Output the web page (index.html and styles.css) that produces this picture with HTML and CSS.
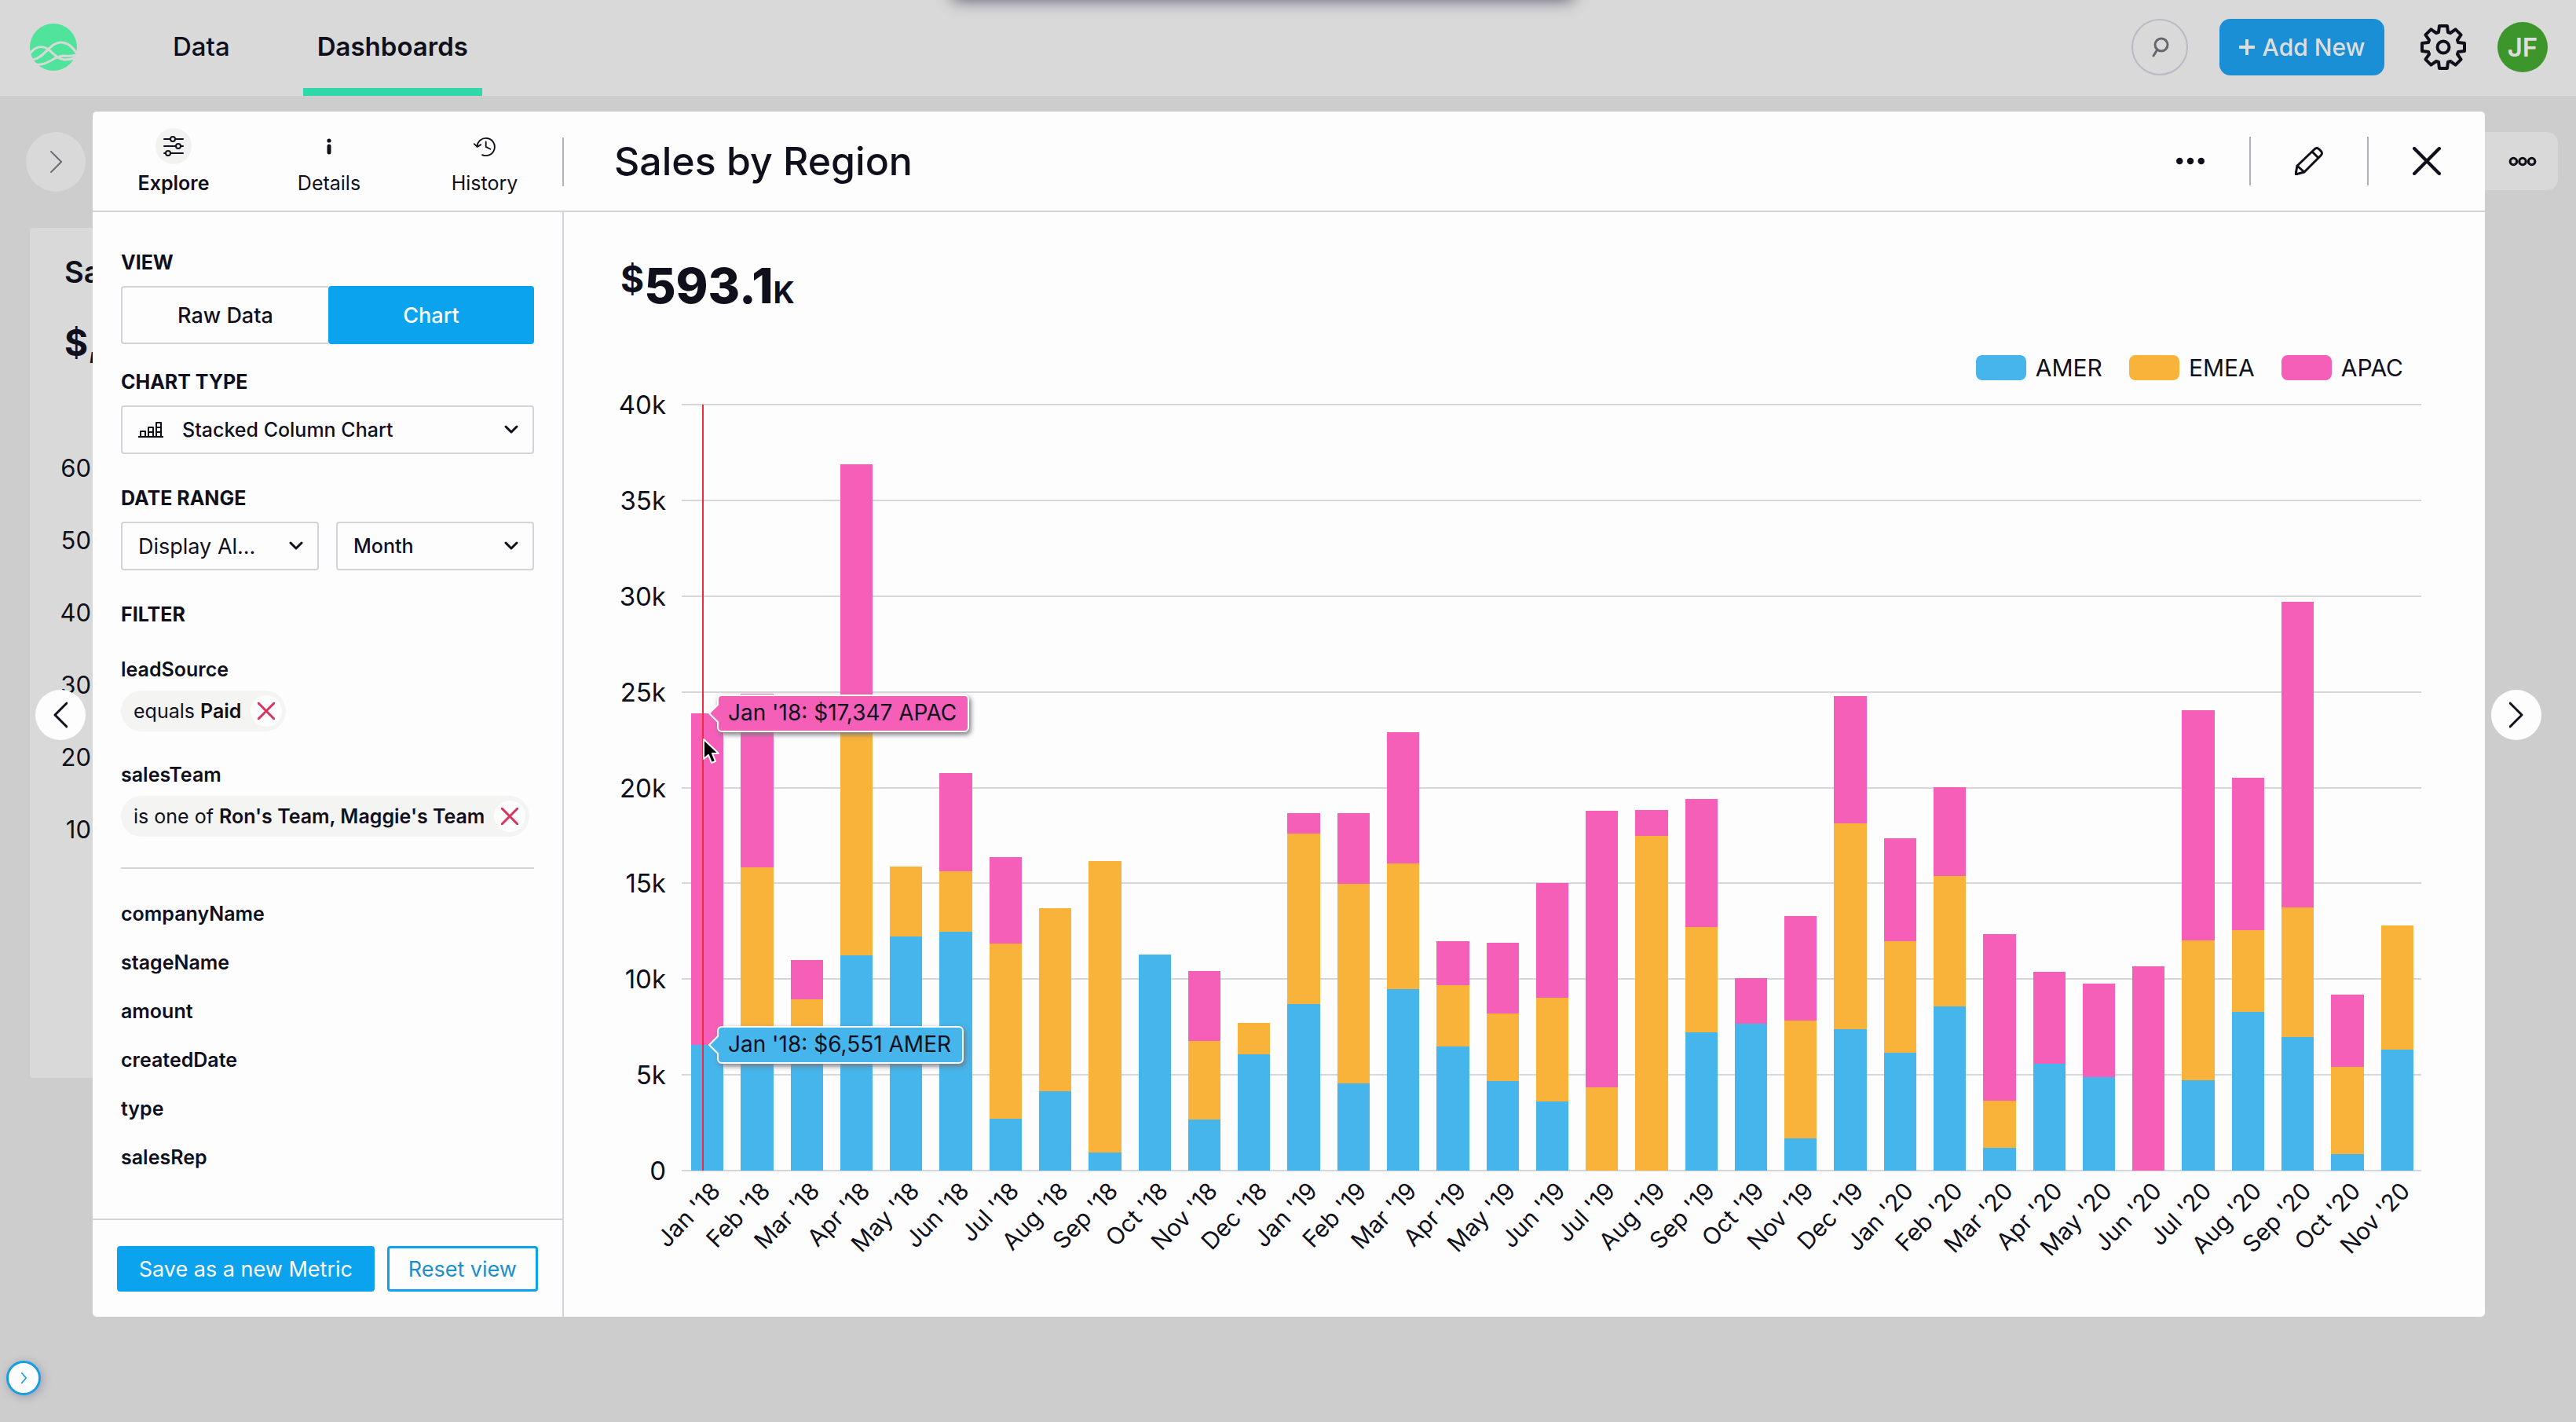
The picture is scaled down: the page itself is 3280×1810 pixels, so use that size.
FILE: index.html
```html
<!DOCTYPE html>
<html lang="en">
<head>
  <meta charset="UTF-8">
  <meta name="viewport" content="width=device-width, initial-scale=1.0">
  <title>Sales by Region</title>
  <link rel="stylesheet" href="styles.css">
</head>
<body>

  <header class="topbar">
    <svg class="logo" viewBox="0 0 60 60">
      <circle cx="30" cy="30" r="30" fill="#4fe39b" stroke="none"/>
      <path d="M0 38 C8 28 17 28 24 33 C32 40 36 45 44 46 C50 46 54 45 57 44 M4 46 C18 44 26 24 39 24 C49 24 54 30 60 38 M8 52 C22 54 30 42 42 41 C48 41 54 42 59 40" fill="none" stroke="#d9d9d9" stroke-width="3"/>
    </svg>
    <nav class="topnav">
      <a href="#">Data</a>
      <a href="#" class="active">Dashboards</a>
    </nav>
    <div class="top-actions">
      <button class="search-btn" aria-label="Search">
        <svg viewBox="0 0 24 26"><circle cx="14" cy="10" r="8"/><path d="M9 16 L4 24"/></svg>
      </button>
      <button class="add-btn"><svg viewBox="0 0 20 20"><path d="M10 1 V19 M1 10 H19"/></svg>Add New</button>
      <button class="gear-btn" aria-label="Settings">
        <svg viewBox="-29 -29 58 58"><path d="M-6 -19 L-5 -27 H5 L6 -19 L9 -18 L15.6 -22.6 L22.6 -15.6 L18 -9 L19 -6 L27 -5 V5 L19 6 L18 9 L22.6 15.6 L15.6 22.6 L9 18 L6 19 L5 27 H-5 L-6 19 L-9 18 L-15.6 22.6 L-22.6 15.6 L-18 9 L-19 6 L-27 5 V-5 L-19 -6 L-18 -9 L-22.6 -15.6 L-15.6 -22.6 L-9 -18 Z"/><circle r="7.5"/></svg>
      </button>
      <button class="avatar">JF</button>
    </div>
  </header>
  <div class="notch"></div>

  <main class="dashboard">
    <div class="dash-bar">
      <button class="dash-toggle" aria-label="Open panel"><svg viewBox="0 0 16 30"><path d="M1 1 L15 15 L1 29"/></svg></button>
      <button class="dash-more" aria-label="More"><svg viewBox="0 0 36 14"><circle cx="7" cy="7" r="4"/><circle cx="18" cy="7" r="4"/><circle cx="29" cy="7" r="4"/></svg></button>
    </div>
    <section class="card">
      <h2>Sa</h2>
      <p class="card-value">$,</p>
      <div class="card-axis">
        <span>60</span><span>50</span><span>40</span><span>30</span><span>20</span><span>10</span>
      </div>
    </section>
  </main>

  <button class="help-btn" aria-label="Expand"><svg viewBox="0 0 10 18"><path d="M2 2 L8 9 L2 16"/></svg></button>
  <button class="nav-btn prev" aria-label="Previous"><svg viewBox="0 0 18 34"><path d="M17 2 L2 17 L17 32"/></svg></button>
  <button class="nav-btn next" aria-label="Next"><svg viewBox="0 0 18 34"><path d="M1 2 L16 17 L1 32"/></svg></button>

  <div class="modal">
    <aside class="sidebar">
      <div class="tabs">
        <button class="tab active">
          <span class="tab-icon"><svg viewBox="0 0 26 26"><path d="M1 4 H9 M15 4 H25 M1 13 H16 M22 13 H25 M1 22 H3 M9 22 H25"/><circle cx="12" cy="4" r="3"/><circle cx="19" cy="13" r="3"/><circle cx="6" cy="22" r="3"/></svg></span>
          Explore
        </button>
        <button class="tab">
          <span class="tab-icon"><svg viewBox="0 0 26 26"><circle cx="13" cy="6" r="2.6" class="fill"/><path d="M13 13 V21" class="stem"/></svg></span>
          Details
        </button>
        <button class="tab">
          <span class="tab-icon"><svg viewBox="0 0 32 28"><path d="M6 15 A12 12 0 1 1 13 26 M2 11 L6 15 L11 12 M18 8 V15 L24 18"/></svg></span>
          History
        </button>
      </div>

      <div class="side-body">
        <h3>VIEW</h3>
        <div class="toggle">
          <button>Raw Data</button>
          <button class="on">Chart</button>
        </div>

        <h3><label for="chartType">CHART TYPE</label></h3>
        <div class="select has-icon">
          <svg class="type-icon" viewBox="0 0 32 22"><path d="M0 20 H32 M3 20 V13 H9 V20 M13 20 V8 H19 V20 M23 20 V2 H29 V20 M13 14 H19 M23 14 H29 M23 8 H29"/></svg>
          <select id="chartType"><option>Stacked Column Chart</option></select>
          <svg class="arrow" viewBox="0 0 18 12"><path d="M2 2 L9 9 L16 2"/></svg>
        </div>

        <h3><label for="range">DATE RANGE</label></h3>
        <div class="row">
          <div class="select light">
            <select id="range"><option>Display Al...</option></select>
            <svg class="arrow" viewBox="0 0 18 12"><path d="M2 2 L9 9 L16 2"/></svg>
          </div>
          <div class="select">
            <select aria-label="Period"><option>Month</option></select>
            <svg class="arrow" viewBox="0 0 18 12"><path d="M2 2 L9 9 L16 2"/></svg>
          </div>
        </div>

        <h3>FILTER</h3>
        <h4>leadSource</h4>
        <div class="chip"><span>equals <b>Paid</b></span><button aria-label="Remove"><svg viewBox="0 0 22 22"><path d="M1 1 L21 21 M21 1 L1 21"/></svg></button></div>
        <h4>salesTeam</h4>
        <div class="chip"><span>is one of <b>Ron's Team, Maggie's Team</b></span><button aria-label="Remove"><svg viewBox="0 0 22 22"><path d="M1 1 L21 21 M21 1 L1 21"/></svg></button></div>

        <ul class="fields">
          <li>companyName</li>
          <li>stageName</li>
          <li>amount</li>
          <li>createdDate</li>
          <li>type</li>
          <li>salesRep</li>
        </ul>
      </div>

      <div class="side-footer">
        <button class="save">Save as a new Metric</button>
        <button class="reset">Reset view</button>
      </div>
    </aside>

    <section class="content">
      <div class="content-head">
        <h1>Sales by Region</h1>
        <div class="head-actions">
          <button aria-label="More"><svg viewBox="0 0 34 34" class="dots"><circle cx="4" cy="17" r="4"/><circle cx="17" cy="17" r="4"/><circle cx="30" cy="17" r="4"/></svg></button>
          <button aria-label="Edit"><svg viewBox="0 0 36 36"><path d="M1 35 L3 24 L25 3 Q28 0 31 3 L33 5 Q36 8 33 11 L12 32 Z M22 6 L30 14 M3 24 L12 32"/></svg></button>
          <button aria-label="Close"><svg viewBox="0 0 34 34" class="close"><path d="M2 2 L32 32 M32 2 L2 32"/></svg></button>
        </div>
      </div>

      <div class="content-body">
        <div class="metric"><span class="sign">$</span><span>593.1</span><span class="unit">K</span></div>
        <div class="legend">
          <span><i class="amer"></i>AMER</span>
          <span><i class="emea"></i>EMEA</span>
          <span><i class="apac"></i>APAC</span>
        </div>
        <div class="chart">
          <div class="y-axis">
            <span>40k</span><span>35k</span><span>30k</span><span>25k</span><span>20k</span><span>15k</span><span>10k</span><span>5k</span><span>0</span>
          </div>
          <div class="plot">
            <div class="grid"><i></i><i></i><i></i><i></i><i></i><i></i><i></i><i></i><i></i></div>
            <div class="bars" id="bars"></div>
            <div class="marker"></div>
            <div class="tip apac" id="tipApac"><svg viewBox="0 0 14 28"><path d="M14 2 L2 14 L14 26"/></svg>Jan '18: $17,347 APAC</div>
            <div class="tip amer" id="tipAmer"><svg viewBox="0 0 14 28"><path d="M14 2 L2 14 L14 26"/></svg>Jan '18: $6,551 AMER</div>
            <svg class="cursor" viewBox="0 0 24 36"><path d="M2 2 V27 L8 22 L12 32 L17 30 L13 20 H21 Z"/></svg>
          </div>
        </div>
        <div class="x-axis" id="labels"></div>
      </div>
    </section>
  </div>

  <script src="chart.js"></script>
</body>
</html>
```
FILE: styles.css
```css
* {
  box-sizing: border-box;
}
body {
  margin: 0;
  min-height: 100vh;
  background: #cdcdcd;
  color: #10101c;
  font-family: Inter, "Open Sans", sans-serif;
  font-size: 27px;
}
button {
  font: inherit;
  color: inherit;
  background: none;
  border: none;
  padding: 0;
  cursor: pointer;
}
h1, h2, h3, h4, p, ul {
  margin: 0;
  padding: 0;
}
svg {
  display: block;
  fill: none;
  stroke: #10101c;
  stroke-width: 2;
  stroke-linecap: round;
  stroke-linejoin: round;
}

/* top bar */
.topbar {
  display: flex;
  align-items: center;
  height: 122px;
  padding: 0 36px 2px 38px;
  background: #d9d9d9;
}
.logo {
  width: 60px;
  height: 60px;
}
.topnav {
  display: flex;
  align-self: stretch;
  margin: 0 0 -2px 104px;
  gap: 75px;
}
.topnav a {
  display: flex;
  align-items: center;
  padding: 6px 18px 0;
  border-bottom: 10px solid transparent;
  color: #10101c;
  font-size: 33px;
  font-weight: 500;
  text-decoration: none;
}
.topnav a.active {
  border-color: #2fd8ab;
  font-weight: 600;
}
.top-actions {
  display: flex;
  align-items: center;
  margin-left: auto;
}
.search-btn {
  display: flex;
  align-items: center;
  justify-content: center;
  width: 72px;
  height: 72px;
  border: 2px solid #b9b9c4;
  border-radius: 50%;
}
.search-btn svg {
  width: 24px;
  height: 28px;
  stroke: #66666e;
  stroke-width: 3;
}
.add-btn {
  display: flex;
  align-items: center;
  justify-content: center;
  gap: 10px;
  width: 210px;
  height: 72px;
  margin-left: 40px;
  border-radius: 14px;
  background: #1a8fd6;
  color: #dedede;
  font-size: 30px;
  font-weight: 500;
}
.add-btn svg {
  width: 20px;
  height: 20px;
  stroke: #dedede;
  stroke-width: 4;
}
.gear-btn {
  margin: 0 40px 0 46px;
}
.gear-btn svg {
  width: 58px;
  height: 58px;
  stroke-width: 4;
}
.avatar {
  width: 64px;
  height: 64px;
  border-radius: 50%;
  background: #3c962b;
  color: #dedede;
  font-size: 33px;
  font-weight: 600;
}
.notch {
  position: absolute;
  top: -20px;
  left: 0;
  right: 64px;
  width: 790px;
  height: 20px;
  margin: 0 auto;
  box-shadow: 0 0 20px #55556a;
}

/* dashboard behind the modal */
.dashboard {
  padding: 46px 0 0 38px;
}
.dash-bar {
  display: flex;
  justify-content: space-between;
}
.dash-toggle {
  display: flex;
  align-items: center;
  justify-content: center;
  width: 76px;
  height: 76px;
  margin-left: -5px;
  border-radius: 50%;
  background: #d9d9d9;
}
.dash-toggle svg {
  width: 15px;
  height: 28px;
  stroke: #66666e;
}
.dash-more {
  width: 120px;
  height: 74px;
  margin-right: 23px;
  padding-left: 56px;
  border-radius: 14px;
  background: #d9d9d9;
}
.dash-more svg {
  width: 38px;
  height: 15px;
  stroke-width: 3;
}
.card {
  height: 1082px;
  margin: 46px 140px 0 0;
  padding: 32px 44px;
  border-radius: 4px;
  background: #d9d9d9;
}
.card h2 {
  font-size: 38px;
  font-weight: 600;
  line-height: 48px;
}
.card-value {
  margin: 38px 0 86px;
  font-size: 46px;
  font-weight: 700;
  line-height: 56px;
}
.card-axis {
  display: flex;
  flex-direction: column;
  width: 34px;
  font-size: 31px;
  line-height: 92px;
}
.card-axis span {
  display: flex;
  justify-content: flex-end;
}
.help-btn {
  position: absolute;
  left: 8px;
  bottom: 34px;
  display: flex;
  align-items: center;
  justify-content: center;
  width: 44px;
  height: 44px;
  border: 3px solid #169fe0;
  border-radius: 50%;
  background: #fdfdfe;
  box-shadow: 2px 2px 12px #9a9aae;
}
.help-btn svg {
  width: 9px;
  height: 16px;
  stroke: #169fe0;
}
.nav-btn {
  position: absolute;
  top: 50%;
  display: flex;
  align-items: center;
  justify-content: center;
  width: 64px;
  height: 64px;
  margin-top: -27px;
  border-radius: 50%;
  background: #fdfdfe;
}
.nav-btn svg {
  width: 18px;
  height: 34px;
  stroke-width: 3;
}
.prev {
  left: 45px;
}
.next {
  right: 44px;
}

/* modal */
.modal {
  position: absolute;
  inset: 142px 116px 134px 118px;
  display: flex;
  border-radius: 5px;
  background: #fdfdfe;
}
.sidebar {
  display: flex;
  flex-direction: column;
  width: 600px;
}
.tabs {
  display: flex;
  align-items: center;
  height: 128px;
  padding: 2px 0 0 4px;
  border-bottom: 2px solid #d3d3da;
}
.tab {
  flex: 1;
  display: flex;
  flex-direction: column;
  align-items: center;
  gap: 8px;
  font-size: 25px;
  line-height: 32px;
}
.tab.active {
  font-weight: 600;
}
.tab-icon {
  display: flex;
  align-items: center;
  justify-content: center;
  width: 46px;
  height: 46px;
  border-radius: 50%;
}
.active .tab-icon {
  background: #f2f2f0;
}
.tab-icon svg {
  height: 26px;
}
.tab-icon .fill {
  fill: #10101c;
  stroke: none;
}
.tab-icon .stem {
  stroke-width: 5;
}
.tabs::after {
  content: "";
  width: 2px;
  height: 62px;
  background: #b0b0b6;
}
.side-body {
  flex: 1;
  padding: 48px 36px 0;
  border-right: 2px solid #d3d3da;
}
.side-body h3 {
  margin-bottom: 14px;
  font-size: 25px;
  font-weight: 700;
  line-height: 32px;
}
.toggle {
  display: flex;
  height: 74px;
  margin-bottom: 32px;
}
.toggle button {
  flex: 1;
  border: 2px solid #d3d3da;
  border-right: none;
  border-radius: 4px 0 0 4px;
  font-weight: 500;
}
.toggle .on {
  border: none;
  border-radius: 4px;
  background: #0ba2ee;
  color: #fdfdfe;
}
.select {
  position: relative;
  flex: 1;
  margin-bottom: 40px;
}
.select select {
  width: 100%;
  height: 62px;
  padding: 0 20px;
  border: 2px solid #d3d3da;
  border-radius: 4px;
  background: transparent;
  color: #10101c;
  font: 500 25px Inter, "Open Sans", sans-serif;
  appearance: none;
}
.select.light select {
  font-size: 27px;
  font-weight: 400;
}
.select.has-icon select {
  padding-left: 76px;
}
.type-icon {
  position: absolute;
  top: 20px;
  left: 22px;
  width: 32px;
  height: 22px;
}
.arrow {
  position: absolute;
  top: 25px;
  right: 20px;
  width: 18px;
  height: 12px;
  stroke-width: 3;
  pointer-events: none;
}
.row {
  display: flex;
  gap: 22px;
}
.side-body h4 {
  font-size: 25px;
  font-weight: 600;
  line-height: 32px;
}
.side-body h3 + h4 {
  margin-top: 38px;
}
.chip {
  display: flex;
  align-items: center;
  width: max-content;
  height: 52px;
  margin: 11px 0 39px;
  padding: 0 5px 0 16px;
  gap: 12px;
  border-radius: 26px;
  background: #f4f4f2;
  font-size: 25px;
}
.chip b {
  font-weight: 600;
}
.chip button {
  display: flex;
  align-items: center;
  justify-content: center;
  width: 40px;
  height: 40px;
  border-radius: 50%;
  background: #fdfdfe;
}
.chip button svg {
  width: 22px;
  height: 22px;
  stroke: #d6335f;
  stroke-width: 3;
}
.fields {
  padding-top: 26px;
  border-top: 2px solid #d3d3da;
  font-size: 25px;
  font-weight: 600;
  line-height: 62px;
  list-style: none;
}
.side-footer {
  display: flex;
  gap: 16px;
  height: 125px;
  padding: 33px 31px;
  border-top: 2px solid #d3d3da;
  border-right: 2px solid #d3d3da;
}
.side-footer button {
  height: 58px;
  border: 3px solid #0ba2ee;
  border-radius: 4px;
}
.side-footer .save {
  flex: 328;
  background: #0ba2ee;
  color: #fdfdfe;
}
.side-footer .reset {
  flex: 190;
  color: #1b8fcb;
}

/* content */
.content {
  flex: 1;
  display: flex;
  flex-direction: column;
  min-width: 0;
}
.content-head {
  display: flex;
  align-items: center;
  justify-content: space-between;
  height: 128px;
  padding-left: 64px;
  border-bottom: 2px solid #d3d3da;
}
.content-head h1 {
  font-size: 50px;
  font-weight: 500;
}
.head-actions {
  display: flex;
}
.head-actions button {
  display: flex;
  align-items: center;
  justify-content: center;
  width: 150px;
  height: 62px;
}
.head-actions button + button {
  border-left: 2px solid #b0b0b6;
}
.head-actions svg {
  width: 36px;
  height: 36px;
  stroke-width: 3;
}
.head-actions .dots {
  fill: #10101c;
  stroke: none;
}
.head-actions .close {
  stroke-width: 4;
}
.content-body {
  flex: 1;
  display: flex;
  flex-direction: column;
  padding: 54px 81px 0 68px;
}
.metric {
  display: flex;
  align-items: baseline;
  height: 80px;
  margin-left: 4px;
  font-size: 62px;
  font-weight: 800;
  line-height: 80px;
}
.metric .sign {
  align-self: flex-start;
  font-size: 46px;
  font-weight: 700;
  line-height: 62px;
}
.metric .unit {
  font-size: 38px;
  font-weight: 700;
}
.legend {
  display: flex;
  justify-content: flex-end;
  gap: 34px;
  margin: 48px 23px 31px 0;
  font-size: 30px;
  line-height: 32px;
}
.legend span {
  display: flex;
  gap: 12px;
}
.legend i {
  width: 64px;
  height: 32px;
  border-radius: 8px;
}
.amer {
  background: #45b5ec;
}
.emea {
  background: #f9b23a;
}
.apac {
  background: #f55fb8;
}
.chart {
  flex: 1;
  display: flex;
}
.y-axis {
  display: flex;
  flex-direction: column;
  justify-content: space-between;
  width: 82px;
  padding-right: 20px;
  font-size: 33px;
  text-align: right;
}
.y-axis span {
  height: 0;
  line-height: 0;
}
.plot {
  position: relative;
  flex: 1;
}
.grid {
  position: absolute;
  inset: 0;
  display: flex;
  flex-direction: column;
  justify-content: space-between;
}
.grid i {
  height: 2px;
  margin: -1px 0;
  background: #d6d6dc;
}
.bars {
  position: absolute;
  inset: 0;
  display: flex;
}
.bar {
  flex: 1;
  display: flex;
  flex-direction: column-reverse;
  padding: 0 10px 0 12px;
}
.marker {
  position: absolute;
  top: 0;
  bottom: 0;
  left: 26px;
  width: 2px;
  background: #ee2a3c;
}
.tip {
  position: absolute;
  left: 45px;
  height: 48px;
  padding: 0 14px 0 12px;
  border: 2px solid #fdfdfe;
  border-radius: 6px;
  box-shadow: 2px 3px 6px #77777f;
  font-size: 28px;
  line-height: 42px;
  white-space: nowrap;
  transform: translateY(50%);
}
.tip svg {
  position: absolute;
  top: 8px;
  left: -14px;
  width: 14px;
  height: 28px;
  stroke: #fdfdfe;
}
.tip.apac svg {
  fill: #f55fb8;
}
.tip.amer svg {
  fill: #45b5ec;
}
.cursor {
  position: absolute;
  top: 424px;
  left: 26px;
  width: 24px;
  height: 36px;
  fill: #000;
  stroke: #fff;
}
.x-axis {
  display: flex;
  height: 186px;
  padding: 5px 0 0 82px;
  font-size: 30px;
  line-height: 30px;
}
.x-axis span {
  flex: 1;
  display: flex;
  justify-content: flex-end;
  width: 0;
  padding-right: 20px;
  white-space: nowrap;
}
.x-axis em {
  height: 30px;
  font-style: normal;
  transform: rotate(-46deg);
  transform-origin: right center;
}
```
FILE: chart.js
```js
// amer, emea, apac for each month
var data = [
  [6551, 0, 17347], [6500, 9320, 9080], [6500, 2460, 2040], [11250, 12250, 13400],
  [12240, 3640, 0], [12470, 3160, 5120], [2720, 9140, 4530], [4130, 9570, 0],
  [960, 15200, 0], [11270, 0, 0], [2680, 4100, 3640], [6070, 1640, 0],
  [8700, 8900, 1080], [4570, 10400, 3680], [9460, 6600, 6840], [6500, 3170, 2330],
  [4660, 3540, 3700], [3630, 5400, 5980], [0, 4360, 14440], [0, 17480, 1370],
  [7230, 5500, 6670], [7660, 0, 2400], [1700, 6130, 5480], [7400, 10720, 6650],
  [6160, 5840, 5350], [8560, 6820, 4640], [1180, 2490, 8700], [5600, 0, 4800],
  [4870, 0, 4890], [0, 0, 10660], [4700, 7330, 12010], [8300, 4250, 7970],
  [6970, 6780, 15950], [880, 4520, 3800], [6300, 6510, 0]
];
var months = ['Jan', 'Feb', 'Mar', 'Apr', 'May', 'Jun', 'Jul', 'Aug', 'Sep', 'Oct', 'Nov', 'Dec'];
var regions = ['amer', 'emea', 'apac'];
var max = 40000;

var bars = document.getElementById('bars');
var labels = document.getElementById('labels');

data.forEach(function(values, i) {
  var bar = document.createElement('div');
  bar.className = 'bar';
  values.forEach(function(value, r) {
    var part = document.createElement('div');
    part.className = regions[r];
    part.style.height = (value / max * 100) + '%';
    bar.appendChild(part);
  });
  bars.appendChild(bar);

  var label = document.createElement('span');
  var text = document.createElement('em');
  text.innerText = months[i % 12] + " '" + (18 + Math.floor(i / 12));
  label.appendChild(text);
  labels.appendChild(label);
});

// tooltips point at the top of their segment
document.getElementById('tipAmer').style.bottom = (6551 / max * 100) + '%';
document.getElementById('tipApac').style.bottom = ((6551 + 17347) / max * 100) + '%';
```
